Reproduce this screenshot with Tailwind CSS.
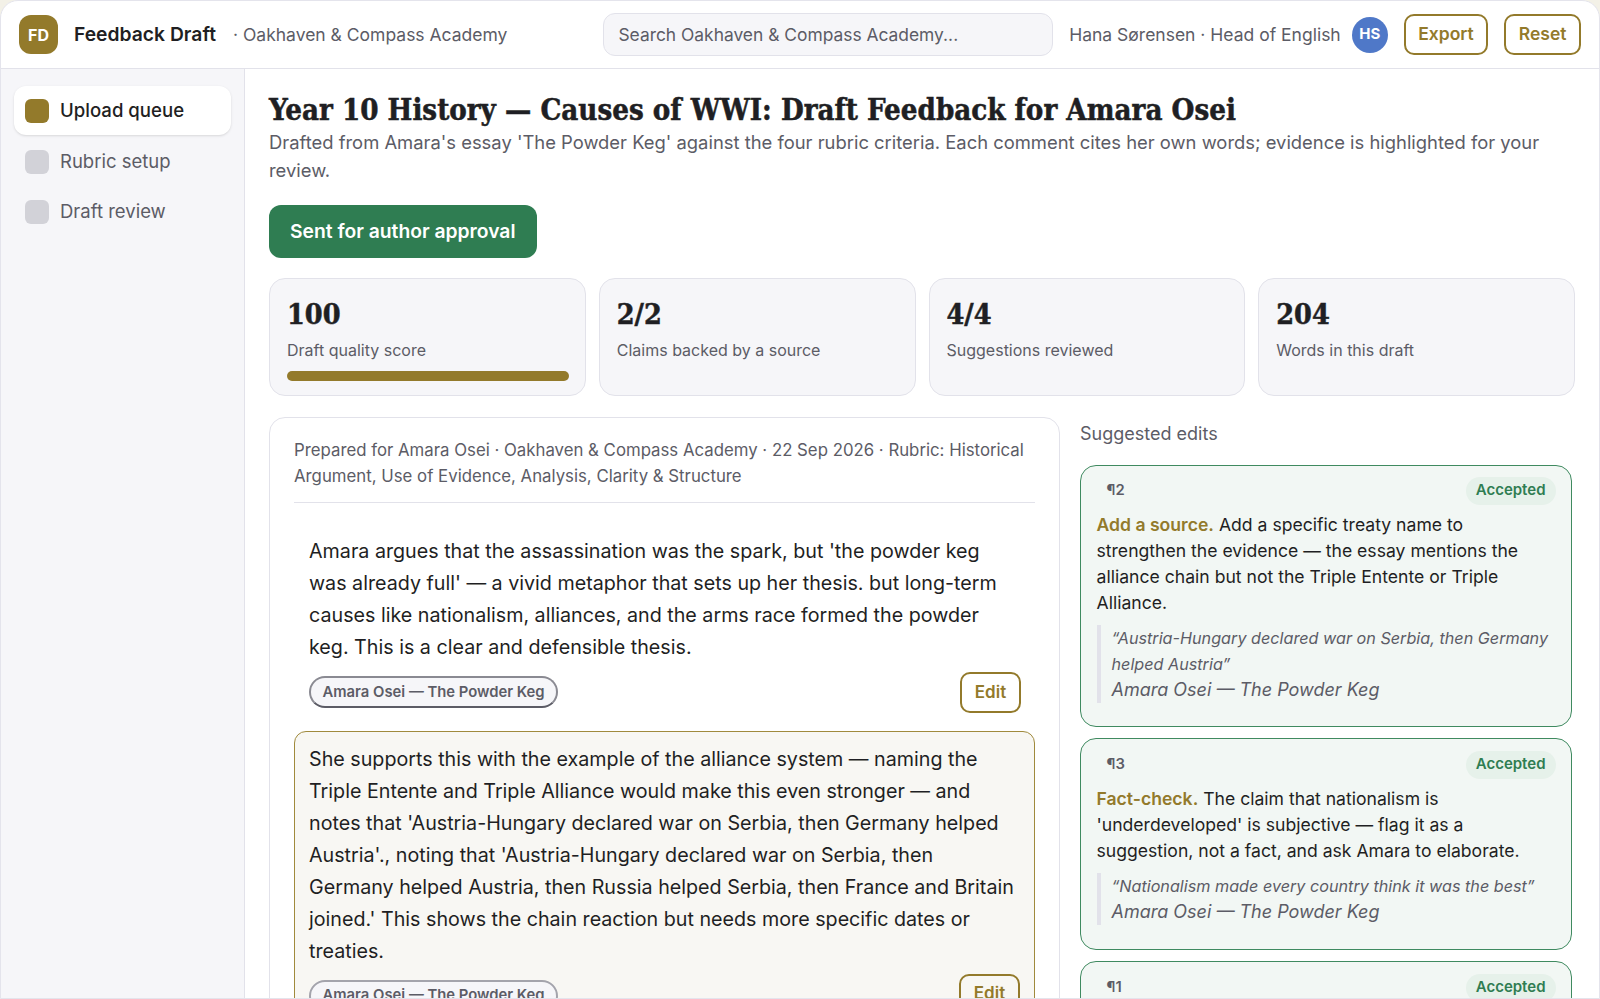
<!DOCTYPE html>
<html lang="en">
<head>
  <meta charset="UTF-8" />
  <title>Feedback Draft</title>
  <script src="https://cdn.jsdelivr.net/npm/@tailwindcss/browser@4"></script>
</head>
<body class="h-screen overflow-hidden bg-[#f3f1e7] font-['Inter',sans-serif] text-[#1f1f23]">
  <div class="h-full flex flex-col bg-white rounded-t-[18px] border border-[#e4e4ec] overflow-hidden">

    <header class="h-[68px] shrink-0 flex items-center whitespace-nowrap border-b border-[#e2e2ea] pl-[18px] pr-[18px]">
      <div class="w-[39px] h-[39px] rounded-xl bg-[#937a2b] text-white flex items-center justify-center font-bold text-[16px]">FD</div>
      <div class="ml-4 font-semibold text-[19.3px]">Feedback Draft</div>
      <div class="ml-[17px] pt-[1px] text-[17.5px] text-[#5c5c66]">· Oakhaven &amp; Compass Academy</div>
      <div class="ml-[96px] w-[450px] h-[43px] rounded-xl border border-[#e2e2ea] bg-[#f6f6f9] flex items-center px-[14px] pt-[1px] text-[17.4px] text-[#5c5c66]">Search Oakhaven &amp; Compass Academy...</div>
      <div class="ml-auto pt-[1px] text-[17.5px] text-[#5c5c66]">Hana Sørensen · Head of English</div>
      <div class="ml-[11px] w-9 h-9 rounded-full bg-[#4f78c8] text-white flex items-center justify-center font-bold text-[15px]">HS</div>
      <button class="ml-4 h-[41px] px-[12.5px] rounded-[10px] border-2 border-[#937a2b] text-[#937a2b] font-semibold text-[17.5px]">Export</button>
      <button class="ml-4 h-[41px] px-[12.5px] rounded-[10px] border-2 border-[#937a2b] text-[#937a2b] font-semibold text-[17.5px]">Reset</button>
    </header>

    <div class="flex-1 flex min-h-0">
      <aside class="w-[244px] shrink-0 bg-[#f6f6f9] border-r border-[#e2e2ea] pt-[17px] px-[13px]">
        <div class="h-[49px] rounded-xl bg-white shadow-sm flex items-center gap-[11px] px-[11px] text-[18.6px] font-medium">
          <span class="w-6 h-6 rounded-md bg-[#937a2b]"></span>Upload queue
        </div>
        <div class="h-[49px] mt-[2px] flex items-center gap-[11px] px-[11px] text-[18.5px] text-[#5c5c66]">
          <span class="w-6 h-6 rounded-md bg-[#d2d2d8]"></span>Rubric setup
        </div>
        <div class="h-[49px] mt-[1px] flex items-center gap-[11px] px-[11px] text-[18.5px] text-[#5c5c66]">
          <span class="w-6 h-6 rounded-md bg-[#d2d2d8]"></span>Draft review
        </div>
      </aside>

      <main class="flex-1 min-w-0 pl-6 pr-6 pt-[23px]">
        <h1 class="font-['DejaVu_Serif_Condensed','DejaVu_Serif',serif] font-bold text-[29.2px] leading-[36px] whitespace-nowrap [-webkit-text-stroke:0.5px_#1f1f23]">Year 10 History — Causes of WWI: Draft Feedback for Amara Osei</h1>
        <p class="text-[18.4px] leading-[28px] text-[#5c5c66]">Drafted from Amara's essay 'The Powder Keg' against the four rubric criteria. Each comment cites her own words; evidence is highlighted for your review.</p>
        <button class="mt-[21px] h-[53px] px-[21px] rounded-xl bg-[#2f7d52] text-white font-semibold text-[19.3px]">Sent for author approval</button>

        <div class="mt-[20px] grid grid-cols-4 gap-[13px]">
          <div class="h-[118px] rounded-2xl border border-[#e2e2ea] bg-[#f6f6f9] pl-[17px] pr-[16px] pt-[16px]">
            <div class="font-['DejaVu_Serif_Condensed','DejaVu_Serif',serif] font-bold text-[28.5px] leading-[38px] [-webkit-text-stroke:0.5px_#1f1f23]">100</div>
            <div class="mt-[5px] text-[16px] text-[#5c5c66]">Draft quality score</div>
            <div class="mt-[9px] h-[10px] rounded-full bg-[#937a2b]"></div>
          </div>
          <div class="h-[118px] rounded-2xl border border-[#e2e2ea] bg-[#f6f6f9] pl-[17px] pr-[16px] pt-[16px]">
            <div class="font-['DejaVu_Serif_Condensed','DejaVu_Serif',serif] font-bold text-[28.5px] leading-[38px] [-webkit-text-stroke:0.5px_#1f1f23]">2/2</div>
            <div class="mt-[5px] text-[16px] text-[#5c5c66]">Claims backed by a source</div>
          </div>
          <div class="h-[118px] rounded-2xl border border-[#e2e2ea] bg-[#f6f6f9] pl-[17px] pr-[16px] pt-[16px]">
            <div class="font-['DejaVu_Serif_Condensed','DejaVu_Serif',serif] font-bold text-[28.5px] leading-[38px] [-webkit-text-stroke:0.5px_#1f1f23]">4/4</div>
            <div class="mt-[5px] text-[16px] text-[#5c5c66]">Suggestions reviewed</div>
          </div>
          <div class="h-[118px] rounded-2xl border border-[#e2e2ea] bg-[#f6f6f9] pl-[17px] pr-[16px] pt-[16px]">
            <div class="font-['DejaVu_Serif_Condensed','DejaVu_Serif',serif] font-bold text-[28.5px] leading-[38px] [-webkit-text-stroke:0.5px_#1f1f23]">204</div>
            <div class="mt-[5px] text-[16px] text-[#5c5c66]">Words in this draft</div>
          </div>
        </div>

        <div class="mt-[21px] flex gap-5 items-start">
          <section class="w-[791px] shrink-0 rounded-t-2xl border border-[#e2e2ea] px-6 pt-5">
            <div class="text-[16.8px] leading-[25.5px] text-[#5c5c66] pb-[13px] border-b border-[#e2e2ea]">Prepared for Amara Osei · Oakhaven &amp; Compass Academy · 22 Sep 2026 · Rubric: Historical Argument, Use of Evidence, Analysis, Clarity &amp; Structure</div>
            <div class="mt-[15px] pl-[15px] pr-[14px] pt-[17px] pb-[16px]">
              <p class="text-[19.7px] leading-[32px]">Amara argues that the assassination was the spark, but 'the powder keg was already full' — a vivid metaphor that sets up her thesis. but long-term causes like nationalism, alliances, and the arms race formed the powder keg. This is a clear and defensible thesis.</p>
              <div class="mt-[9px] flex items-start justify-between">
                <span class="mt-[4px] h-[32px] px-[11.5px] rounded-full border-2 border-[#8a8a92] border-b-[#5c5c66] bg-[#f6f6f9] flex items-center text-[14.8px] font-semibold text-[#5c5c66]">Amara Osei — The Powder Keg</span>
                <button class="h-[41px] w-[61px] rounded-[10px] border-2 border-[#937a2b] text-[#937a2b] font-semibold text-[17px]">Edit</button>
              </div>
            </div>
            <div class="mt-[2px] rounded-xl border-[1.5px] border-[#a08a3c] bg-[#f8f7f3] px-[14px] pt-[10.5px] pb-3">
              <p class="text-[19.7px] leading-[32px]">She supports this with the example of the alliance system — naming the Triple Entente and Triple Alliance would make this even stronger — and notes that 'Austria-Hungary declared war on Serbia, then Germany helped Austria'., noting that 'Austria-Hungary declared war on Serbia, then Germany helped Austria, then Russia helped Serbia, then France and Britain joined.' This shows the chain reaction but needs more specific dates or treaties.</p>
              <div class="mt-[7px] flex items-start justify-between">
                <span class="mt-[6px] h-[32px] px-[11.5px] rounded-full border-2 border-[#a4a4ac] bg-[#f6f6f9] flex items-center text-[14.8px] font-semibold text-[#5c5c66]">Amara Osei — The Powder Keg</span>
                <button class="h-[41px] w-[61px] rounded-[10px] border-2 border-[#937a2b] text-[#937a2b] font-semibold text-[17px]">Edit</button>
              </div>
            </div>
          </section>

          <section class="w-[492px] shrink-0">
            <div class="text-[18px] text-[#5c5c66] leading-[32px] pt-[1px]">Suggested edits</div>
            <div class="mt-[15px] flex flex-col gap-[11px]">
              <article class="rounded-2xl border-[1.5px] border-[#3f8a60] bg-[#f2f7f4] px-[15.5px] pt-[10.5px] pb-[23px]">
                <div class="flex items-center justify-between">
                  <span class="px-[10px] text-[14.8px] font-semibold text-[#5c5c66]">¶2</span>
                  <span class="h-[28px] px-[10px] rounded-full bg-[#e6f1ea] flex items-center text-[15px] font-semibold text-[#2f7d52]">Accepted</span>
                </div>
                <p class="mt-[7px] text-[17.6px] leading-[26px]"><b class="font-semibold text-[#937a2b]">Add a source.</b> Add a specific treaty name to strengthen the evidence — the essay mentions the alliance chain but not the Triple Entente or Triple Alliance.</p>
                <blockquote class="mt-[9px] border-l-4 border-[#e2e2ea] pl-[11px] italic text-[#5c5c66] text-[18px] leading-[26px]"><span class="text-[16.2px]">“Austria-Hungary declared war on Serbia, then Germany helped Austria”</span><br />Amara Osei — The Powder Keg</blockquote>
              </article>
              <article class="rounded-2xl border-[1.5px] border-[#3f8a60] bg-[#f2f7f4] px-[15.5px] pt-[12px] pb-[24px]">
                <div class="flex items-center justify-between">
                  <span class="px-[10px] text-[14.8px] font-semibold text-[#5c5c66]">¶3</span>
                  <span class="h-[28px] px-[10px] rounded-full bg-[#e6f1ea] flex items-center text-[15px] font-semibold text-[#2f7d52]">Accepted</span>
                </div>
                <p class="mt-[7.5px] text-[17.6px] leading-[26px]"><b class="font-semibold text-[#937a2b]">Fact-check.</b> The claim that nationalism is 'underdeveloped' is subjective — flag it as a suggestion, not a fact, and ask Amara to elaborate.</p>
                <blockquote class="mt-[9px] border-l-4 border-[#e2e2ea] pl-[11px] italic text-[#5c5c66] text-[18px] leading-[26px]"><span class="text-[16.2px]">“Nationalism made every country think it was the best”</span><br />Amara Osei — The Powder Keg</blockquote>
              </article>
              <article class="h-[120px] rounded-2xl border-[1.5px] border-[#3f8a60] bg-[#f2f7f4] px-[15.5px] pt-[11.5px]">
                <div class="flex items-center justify-between">
                  <span class="px-[10px] text-[14.8px] font-semibold text-[#5c5c66]">¶1</span>
                  <span class="h-[28px] px-[10px] rounded-full bg-[#e6f1ea] flex items-center text-[15px] font-semibold text-[#2f7d52]">Accepted</span>
                </div>
              </article>
            </div>
          </section>
        </div>
      </main>
    </div>
  </div>
</body>
</html>
